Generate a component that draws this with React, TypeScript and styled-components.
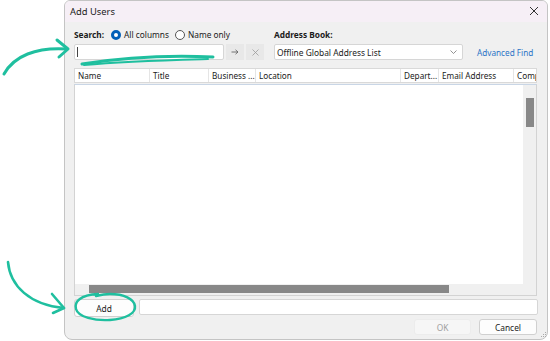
import React from "react";
import styled, { createGlobalStyle } from "styled-components";

const GlobalStyle = createGlobalStyle`
  html, body {
    margin: 0;
    padding: 0;
    background: #ffffff;
  }
  body {
    font-family: "Noto Sans", "Liberation Sans", sans-serif;
    color: #1b1b1b;
  }
`;

const Page = styled.div`
  position: relative;
  width: 550px;
  height: 341px;
  overflow: hidden;
`;

const Dialog = styled.div`
  margin-left: 64px;
  width: 484px;
  height: 340px;
  box-sizing: border-box;
  border: 1px solid #c4c4c4;
  border-radius: 6px 6px 8px 8px;
  background: #f0f0f0;
  display: flex;
  flex-direction: column;
  overflow: hidden;
`;

const TitleBar = styled.div`
  height: 21px;
  background: #f6eff6;
  display: flex;
  align-items: center;
  justify-content: space-between;
  padding: 0 8px 1px 5px;
  box-sizing: border-box;
  font-size: 9.4px;
  color: #222;
`;

const CloseButton = styled.span`
  display: flex;
  align-items: center;
`;

const Body = styled.div`
  flex: 1;
  display: flex;
  flex-direction: column;
  padding: 6px 9px 0 9px;
`;

const TopRow = styled.div`
  display: flex;
  align-items: flex-end;
`;

const Column = styled.div<{ $w: number }>`
  width: ${(p) => p.$w}px;
  display: flex;
  flex-direction: column;
  gap: 3px;
`;

const LabelLine = styled.div`
  height: 13px;
  display: flex;
  align-items: center;
  gap: 4px;
  font-size: 8.3px;
`;

const Bold = styled.span`
  font-weight: 700;
  margin-right: 3px;
`;

const RadioText = styled.span`
  margin-right: 2px;
`;

const Radio = styled.span<{ $on?: boolean }>`
  width: 10px;
  height: 10px;
  border-radius: 50%;
  box-sizing: border-box;
  border: ${(p) => (p.$on ? "3px solid #005fb8" : "1px solid #555")};
  background: #fff;
  margin-right: -1px;
`;

const ControlLine = styled.div`
  display: flex;
  align-items: center;
  gap: 2px;
  height: 16px;
`;

const TextBox = styled.div<{ $w?: number }>`
  width: ${(p) => (p.$w ? `${p.$w}px` : "auto")};
  flex: ${(p) => (p.$w ? "none" : "1")};
  height: 16px;
  box-sizing: border-box;
  background: #fff;
  border: 1px solid #d6d6d6;
  border-radius: 2px;
  display: flex;
  align-items: center;
  padding-left: 2px;
  font-size: 8.4px;
`;

const Caret = styled.span`
  width: 1px;
  height: 10px;
  background: #444;
`;

const IconButton = styled.span`
  width: 18px;
  height: 16px;
  background: #e8e8e8;
  display: flex;
  align-items: center;
  justify-content: center;
`;

const Select = styled(TextBox)`
  justify-content: space-between;
  padding: 0 5px 0 2px;
`;

const Link = styled.span`
  margin-left: 14px;
  height: 16px;
  display: flex;
  align-items: center;
  font-size: 8.2px;
  color: #2a73c6;
`;

const ListFrame = styled.div`
  margin-top: 8px;
  width: 463px;
  display: flex;
  flex-direction: column;
  gap: 1px;
`;

const Header = styled.div`
  height: 15px;
  box-sizing: border-box;
  border: 1px solid #d9d9d9;
  background: #fff;
  display: flex;
  font-size: 8.2px;
  overflow: hidden;
`;

const HeaderCell = styled.div<{ $w: number }>`
  width: ${(p) => p.$w}px;
  flex: none;
  box-sizing: border-box;
  padding-left: 3px;
  border-right: 1px solid #e5e5e5;
  display: flex;
  align-items: center;
  white-space: nowrap;
  overflow: hidden;
`;

const ListBody = styled.div`
  height: 212px;
  box-sizing: border-box;
  border: 1px solid #d3d3d3;
  border-top-color: #c9d6e6;
  display: grid;
  grid-template-columns: 1fr 13px;
  grid-template-rows: 1fr 11px;
`;

const Blank = styled.div`
  background: #fff;
`;

const VTrack = styled.div`
  background: #f0f0f0;
  padding: 13px 2px 0 3px;
`;

const VThumb = styled.div`
  height: 29px;
  background: #888;
`;

const HTrack = styled.div`
  background: #f0f0f0;
  padding: 1px 0 2px 14px;
`;

const HThumb = styled.div`
  width: 360px;
  height: 8px;
  background: #888;
`;

const Corner = styled.div`
  background: #f0f0f0;
`;

const AddRow = styled.div`
  margin-top: 3px;
  display: flex;
  gap: 5px;
  height: 18px;
`;

const Button = styled.div<{ $disabled?: boolean; $w: number }>`
  width: ${(p) => p.$w}px;
  box-sizing: border-box;
  background: ${(p) => (p.$disabled ? "#f6f6f6" : "#fdfdfd")};
  border: 1px solid ${(p) => (p.$disabled ? "#ececec" : "#d0d0d0")};
  border-radius: 3px;
  display: flex;
  align-items: center;
  justify-content: center;
  font-size: 8.4px;
  color: ${(p) => (p.$disabled ? "#a0a0a0" : "#1b1b1b")};
`;

const ButtonRow = styled.div`
  margin-top: 2px;
  display: flex;
  justify-content: flex-end;
  gap: 8px;
  height: 16px;
  width: 463px;
`;

const Overlay = styled.svg`
  position: absolute;
  left: 0;
  top: 0;
  pointer-events: none;
`;

const Grip = styled.svg`
  position: absolute;
  right: 3px;
  bottom: 3px;
`;

const columns: [string, number][] = [
  ["Name", 75],
  ["Title", 59],
  ["Business ...", 47],
  ["Location", 145],
  ["Depart...", 38],
  ["Email Address", 75],
  ["Comp", 30],
];

export default function App() {
  return (
    <Page>
      <GlobalStyle />
      <Dialog>
        <TitleBar>
          <span>Add Users</span>
          <CloseButton>
            <svg width="10" height="10" viewBox="0 0 10 10">
              <path d="M1 1L9 9M9 1L1 9" stroke="#333" strokeWidth="1" />
            </svg>
          </CloseButton>
        </TitleBar>
        <Body>
          <TopRow>
            <Column $w={200}>
              <LabelLine>
                <Bold>Search:</Bold>
                <Radio $on />
                <RadioText>All columns</RadioText>
                <Radio />
                <RadioText>Name only</RadioText>
              </LabelLine>
              <ControlLine>
                <TextBox $w={150}>
                  <Caret />
                </TextBox>
                <IconButton>
                  <svg width="8" height="6" viewBox="0 0 8 6">
                    <path d="M0.5 3H7M4.5 0.8L7 3L4.5 5.2" stroke="#666" fill="none" strokeWidth="0.9" />
                  </svg>
                </IconButton>
                <IconButton>
                  <svg width="7" height="7" viewBox="0 0 7 7">
                    <path d="M0.5 0.5L6.5 6.5M6.5 0.5L0.5 6.5" stroke="#9a9a9a" strokeWidth="0.8" />
                  </svg>
                </IconButton>
              </ControlLine>
            </Column>
            <Column $w={189}>
              <LabelLine>
                <Bold>Address Book:</Bold>
              </LabelLine>
              <ControlLine>
                <Select>
                  <span>Offline Global Address List</span>
                  <svg width="7" height="4" viewBox="0 0 7 4">
                    <path d="M0.5 0.5L3.5 3.5L6.5 0.5" stroke="#777" fill="none" strokeWidth="0.8" />
                  </svg>
                </Select>
              </ControlLine>
            </Column>
            <Link>Advanced Find</Link>
          </TopRow>
          <ListFrame>
            <Header>
              {columns.map(([label, w]) => (
                <HeaderCell key={label} $w={w}>
                  {label}
                </HeaderCell>
              ))}
            </Header>
            <ListBody>
              <Blank />
              <VTrack>
                <VThumb />
              </VTrack>
              <HTrack>
                <HThumb />
              </HTrack>
              <Corner />
            </ListBody>
          </ListFrame>
          <AddRow>
            <Button $w={60}>Add</Button>
            <TextBox />
          </AddRow>
          <ButtonRow>
            <Button $w={57} $disabled>
              OK
            </Button>
            <Button $w={58}>Cancel</Button>
          </ButtonRow>
        </Body>
      </Dialog>
      <Grip width="6" height="6" viewBox="0 0 6 6">
        <g fill="#aaa">
          <rect x="4" y="0" width="1" height="1" />
          <rect x="2" y="2" width="1" height="1" />
          <rect x="4" y="2" width="1" height="1" />
          <rect x="0" y="4" width="1" height="1" />
          <rect x="2" y="4" width="1" height="1" />
          <rect x="4" y="4" width="1" height="1" />
        </g>
      </Grip>
      <Overlay width="550" height="341" viewBox="0 0 550 341">
        <g fill="none" stroke="#1fbf9f" strokeLinecap="round" strokeLinejoin="round">
          <path d="M4 74 C 14 56 36 47 67 49" strokeWidth="3" />
          <path d="M57 40 L 68 49 L 59 57" strokeWidth="3" />
          <path d="M82 64 C 120 58 170 55 213 57" strokeWidth="3" />
          <path d="M208 59 C 170 60 125 61 84 65" strokeWidth="2" />
          <path d="M8 262 C 10 286 30 305 64 308" strokeWidth="2.6" />
          <path d="M52 294 L 64 308 L 53 313" strokeWidth="2.6" />
          <path d="M98 294 C 80 295 74 302 76 309 C 78 317 95 321 110 320 C 126 319 136 313 135 306 C 134 299 124 294 110 294 C 104 294 100 295 96 296" strokeWidth="2.4" />
        </g>
      </Overlay>
    </Page>
  );
}
